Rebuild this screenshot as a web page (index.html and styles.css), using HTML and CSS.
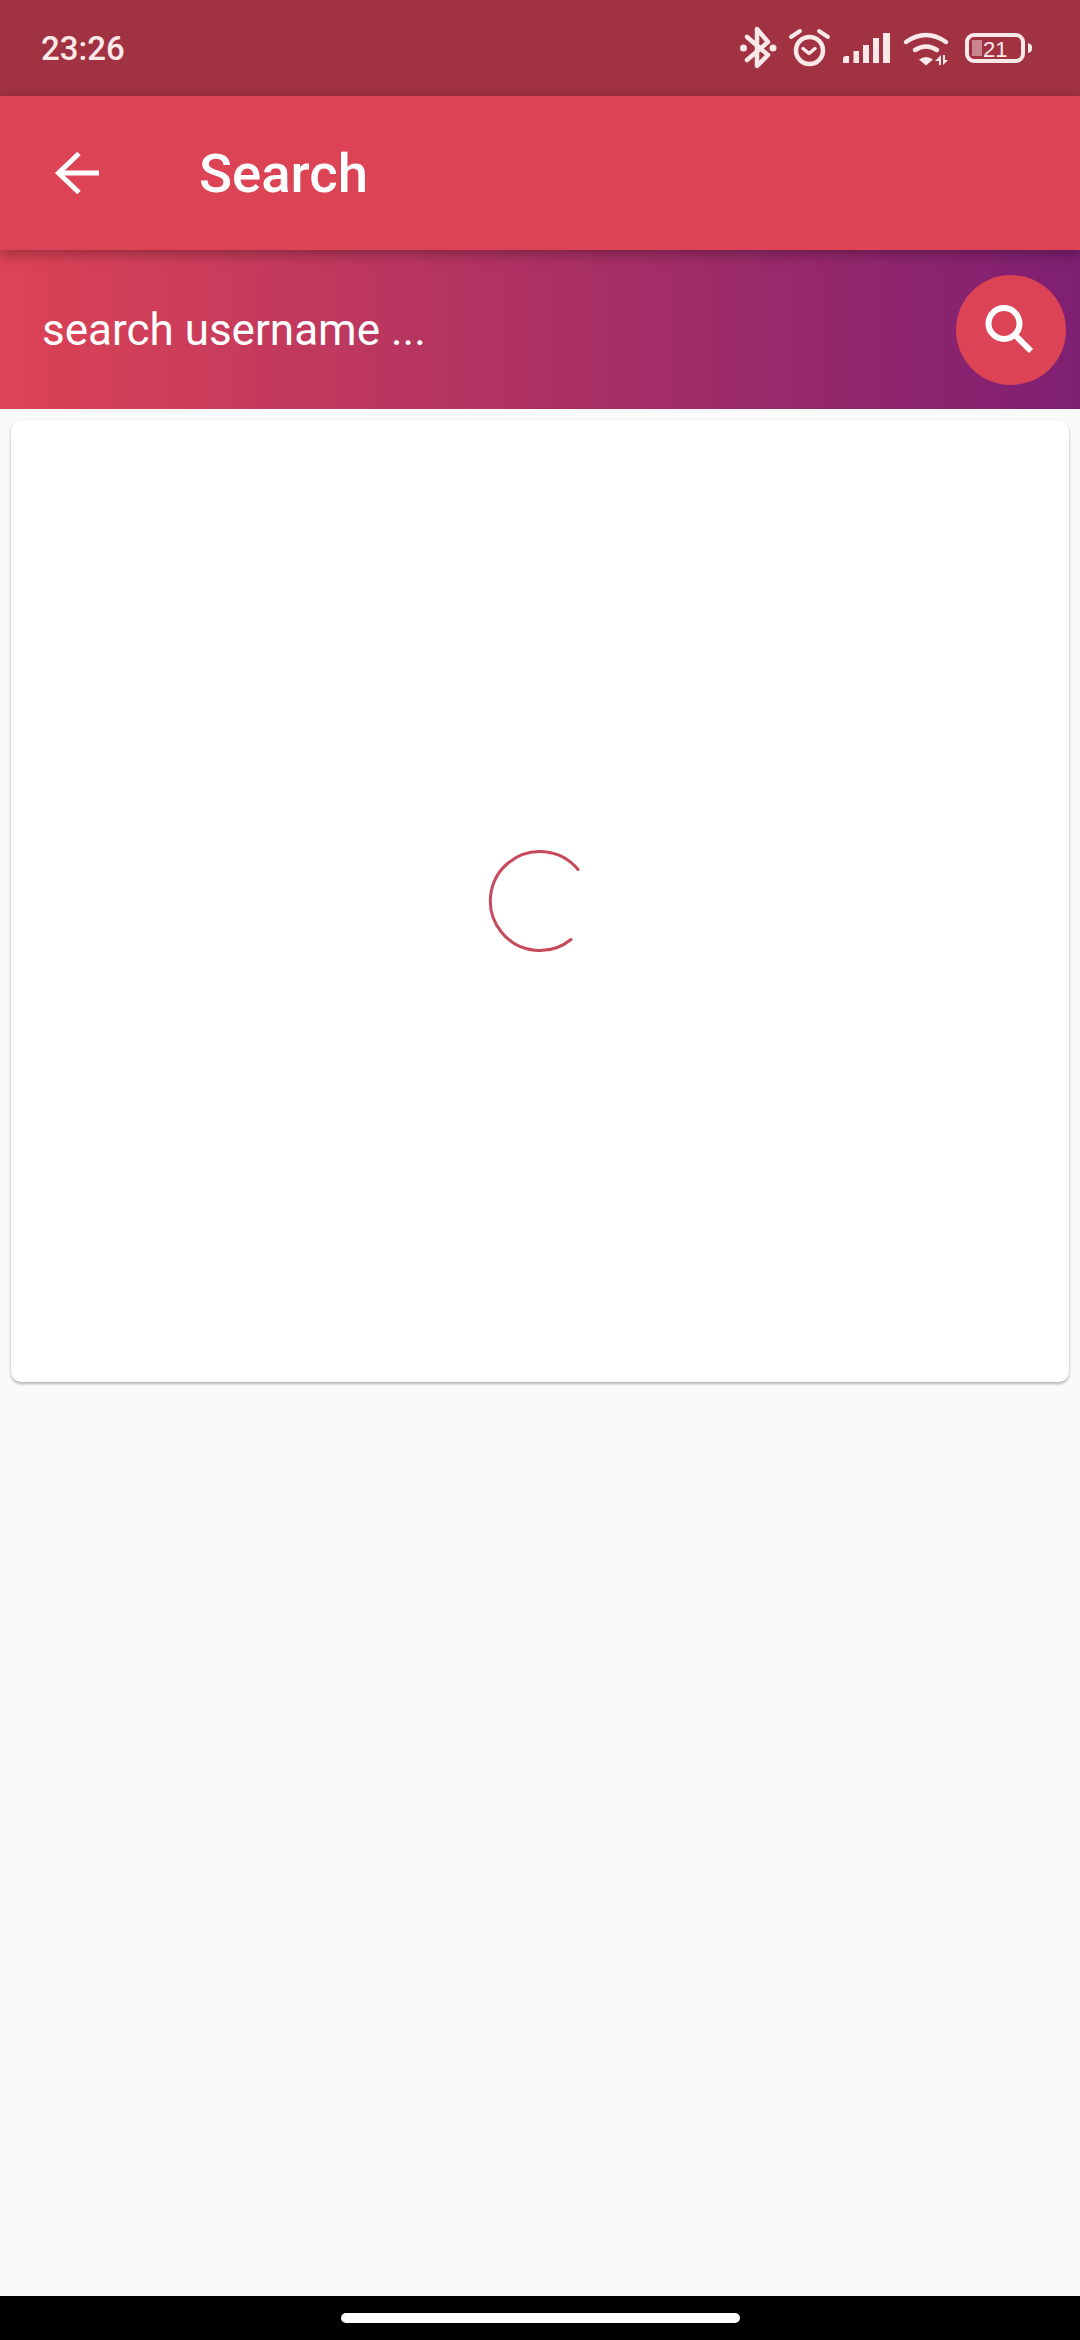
FILE: index.html
```html
<!DOCTYPE html>
<html lang="en">
<head>
<meta charset="utf-8">
<title>Search</title>
<link rel="stylesheet" href="styles.css">
</head>
<body>
<div class="screen">
  <header class="status">
    <span class="time">23:26</span>
    <svg class="status-icons" width="310" height="50" viewBox="0 0 310 50" fill="none">
      <path d="M7 14 28 32 17 43V6L28 19 7 37" stroke="#fbe9ea" stroke-width="4.500" stroke-linecap="round" stroke-linejoin="round"/>
      <g fill="#fbe9ea"><circle cx="3.500" cy="25" r="3.500"/><circle cx="33" cy="25" r="3.500"/></g>
      <g stroke="#fbe9ea" fill="none" stroke-linecap="round" stroke-linejoin="round">
        <circle cx="69.500" cy="27.500" r="13.500" stroke-width="4.500"/>
        <path d="M63 25.500l6 5 6-5" stroke-width="3.500"/>
        <path d="M51 14l9-6M88 14l-9-6" stroke-width="4"/>
      </g>
      <g fill="#fbe9ea">
        <path d="M103 36q0-3 3-3h3v7h-6z"/>
        <rect x="113.500" y="28" width="5.500" height="12"/>
        <rect x="123" y="22" width="6" height="18"/>
        <rect x="133" y="15" width="6" height="25"/>
        <rect x="143" y="10" width="7" height="30"/>
      </g>
      <g stroke="#fbe9ea" fill="none" stroke-width="4.500" stroke-linecap="round">
        <path d="M166 19q20-14 40 0"/>
        <path d="M175 27q11-7 22 0"/>
      </g>
      <path d="M179 36.500q7-5 14 0l-7 6z" fill="#fbe9ea"/>
      <path d="M201 32l-6 6h4v4h2zM203 42l5-5h-3v-5h-2z" fill="#fbe9ea"/>
      <rect x="227" y="12" width="56" height="26" rx="7" stroke="#fbe9ea" stroke-width="4"/>
      <rect x="232" y="17" width="10" height="16" fill="#fbe9ea" fill-opacity=".45"/>
      <path d="M288 20q4 1 4 4v2q0 3-4 4z" fill="#fbe9ea"/>
      <text x="243" y="33.500" class="batt">21</text>
    </svg>
  </header>
  <div class="appbar">
    <svg class="back" width="46" height="46" viewBox="0 0 46 46" fill="none" stroke="#fff" stroke-width="5">
      <path d="M45 23H5M25 3.500 4.500 23 25 42.500"/>
    </svg>
    <h1 class="title">Search</h1>
  </div>
  <div class="searchbar">
    <span class="query">search username ...</span>
    <div class="search-btn">
      <svg width="58" height="58" viewBox="0 0 58 58" fill="none" stroke="#fff" stroke-width="6">
        <circle cx="22" cy="22.500" r="15.500"/>
        <path d="M33 34 49 50"/>
      </svg>
    </div>
  </div>
  <main class="content">
    <section class="card">
      <svg width="104" height="104" viewBox="0 0 104 104" fill="none" stroke="#c64a5c" stroke-width="3" stroke-linecap="round">
        <path d="M90 20.500A49.500 49.500 0 1 0 83 90.500"/>
      </svg>
    </section>
  </main>
  <footer class="navbar"><div class="pill"></div></footer>
</div>
</body>
</html>
```
FILE: styles.css
```css
* { box-sizing: border-box; margin: 0; padding: 0; }
html, body { width: 1080px; height: 2340px; overflow: hidden; }
body { font-family: Roboto, "Noto Sans", sans-serif; background: #fafafa; }
.screen { width: 1080px; height: 2340px; display: flex; flex-direction: column; }

.status {
  height: 96px;
  flex: none;
  background: #a03241;
  display: flex;
  align-items: center;
  justify-content: space-between;
  padding: 0 30px 0 41px;
}
.time { color: #fbe9ea; font-size: 33px; font-weight: 500; }
.batt { fill: #fbe9ea; font-family: "Liberation Sans", sans-serif; font-size: 22px; }

.appbar {
  height: 154px;
  flex: none;
  background: #dc4355;
  display: flex;
  align-items: center;
  padding-left: 54px;
  position: relative;
  z-index: 2;
  box-shadow: 0 4px 12px rgba(0, 0, 0, .3);
}
.back { flex: none; }
.title { color: #fff; font-size: 54.5px; font-weight: 500; margin-left: 99px; }

.searchbar {
  height: 159px;
  flex: none;
  background: linear-gradient(90deg, #dc4355 0%, #7e1f72 100%);
  display: flex;
  align-items: center;
  justify-content: space-between;
  padding: 0 14px 0 42px;
}
.query { color: #fff; font-size: 44px; }
.search-btn {
  width: 110px;
  height: 110px;
  border-radius: 50%;
  background: #dc4355;
  display: flex;
  align-items: center;
  justify-content: center;
}

.content { flex: 1; padding: 11px 11px 0; }
.card {
  height: 962px;
  background: #fff;
  border-radius: 10px;
  box-shadow: 0 2px 3px rgba(0, 0, 0, .28), 0 0 2px rgba(0, 0, 0, .08);
  display: flex;
  align-items: center;
  justify-content: center;
}

.navbar {
  height: 44px;
  flex: none;
  background: #000;
  display: flex;
  justify-content: center;
  padding-top: 17px;
}
.pill { width: 399px; height: 10px; border-radius: 5px; background: #fff; }
```
